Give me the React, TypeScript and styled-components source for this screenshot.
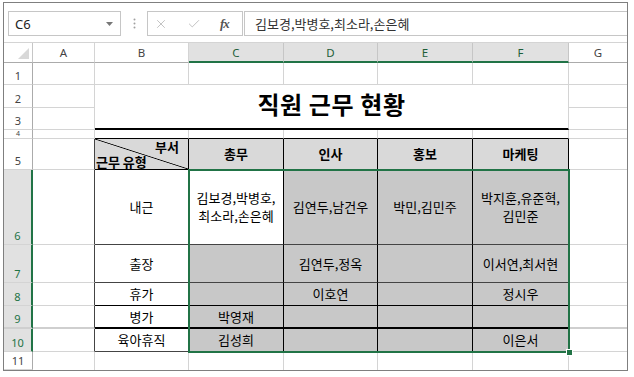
import styled, { createGlobalStyle } from 'styled-components'
import { X, Check } from 'lucide-react'

type Line = 'grid' | 'dark' | 'black' | 'thick' | 'freeze' | 'none'

const LINES: Record<Line, string> = {
  grid: '1px solid #d4d4d4',
  dark: '1px solid #444',
  black: '1px solid #000',
  thick: '2px solid #000',
  freeze: '2px solid #cfcfcf',
  none: '0',
}

const GREEN = '#217346'
const COL_LETTERS = ['A', 'B', 'C', 'D', 'E', 'F', 'G']
const ROW_COUNT = 11

// sheet row -> grid row is r + 1, column A..G -> grid column 2..8
const CONTENT: Record<string, string> = {
  '5-4': '총무',
  '5-5': '인사',
  '5-6': '홍보',
  '5-7': '마케팅',
  '6-3': '내근',
  '6-4': '김보경,박병호,\n최소라,손은혜',
  '6-5': '김연두,남건우',
  '6-6': '박민,김민주',
  '6-7': '박지훈,유준혁,\n김민준',
  '7-3': '출장',
  '7-5': '김연두,정옥',
  '7-7': '이서연,최서현',
  '8-3': '휴가',
  '8-5': '이호연',
  '8-7': '정시우',
  '9-3': '병가',
  '9-4': '박영재',
  '10-3': '육아휴직',
  '10-4': '김성희',
  '10-7': '이은서',
}

function inTable(r: number, c: number) {
  return r >= 5 && r <= 10 && c >= 3 && c <= 7
}

function rightLine(r: number, c: number): Line {
  if (c === 8) return 'none'
  if (c === 2 && r >= 5 && r <= 10) return 'dark'
  if (inTable(r, c)) return 'black'
  return 'grid'
}

function bottomLine(r: number, c: number): Line {
  if (r === ROW_COUNT) return 'none'
  if (r === 4 && c >= 3 && c <= 7) return 'black'
  if (inTable(r, c)) {
    if (r === 5 || r === 8) return 'black'
    if (r === 9) return 'thick'
    return 'dark'
  }
  if (r === 9) return 'freeze'
  return 'grid'
}

function fillOf(r: number, c: number) {
  if (r === 5 && inTable(r, c)) return '#d9d9d9'
  if (r >= 6 && r <= 10 && c >= 4 && c <= 7 && !(r === 6 && c === 4)) return '#c8c8c8'
  return '#fff'
}

export default function App() {
  const cells = []
  for (let r = 1; r <= ROW_COUNT; r++) {
    for (let c = 2; c <= 8; c++) {
      if ((r === 2 || r === 3) && c >= 3 && c <= 7) continue
      if (r === 5 && c === 3) continue
      cells.push(
        <Cell
          key={`${r}-${c}`}
          $col={c}
          $row={r + 1}
          $right={rightLine(r, c)}
          $bottom={bottomLine(r, c)}
          $fill={fillOf(r, c)}
          $bold={r === 5}
        >
          {CONTENT[`${r}-${c}`]}
        </Cell>
      )
    }
  }

  return (
    <>
      <GlobalStyle />
      <Window>
        <FormulaBar>
          <NameBox>
            <span>C6</span>
            <svg width="7" height="4" viewBox="0 0 7 4">
              <path d="M0 0h7L3.5 4z" fill="#777" />
            </svg>
          </NameBox>
          <Grip>
            <svg width="3" height="11" viewBox="0 0 3 11">
              <circle cx="1.5" cy="1.5" r="1" fill="#a0a0a0" />
              <circle cx="1.5" cy="5.5" r="1" fill="#a0a0a0" />
              <circle cx="1.5" cy="9.5" r="1" fill="#a0a0a0" />
            </svg>
          </Grip>
          <IconBox>
            <X size={14} strokeWidth={1.4} color="#b5b5b5" />
            <Check size={14} strokeWidth={1.4} color="#b5b5b5" />
            <Fx>fx</Fx>
          </IconBox>
          <FormulaInput>김보경,박병호,최소라,손은혜</FormulaInput>
        </FormulaBar>

        <Sheet>
          <Corner>
            <Triangle />
          </Corner>
          {COL_LETTERS.map((l, i) => (
            <ColHeader key={l} $col={i + 2} $selected={i >= 2 && i <= 5} $last={i === 6}>
              {l}
            </ColHeader>
          ))}
          {Array.from({ length: ROW_COUNT }, (_, i) => i + 1).map((r) => (
            <RowHeader key={r} $row={r + 1} $selected={r >= 6 && r <= 10} $squash={r === 4}>
              {r}
            </RowHeader>
          ))}

          {cells}

          <Title>직원 근무 현황</Title>
          <SplitHeader>
            <span>부서</span>
            <span>근무 유형</span>
          </SplitHeader>

          <Selection>
            <FillHandle />
          </Selection>
        </Sheet>
      </Window>
    </>
  )
}

const GlobalStyle = createGlobalStyle`
  html, body {
    margin: 0;
    padding: 0;
    background: #fff;
  }
  body {
    font-family: "Noto Sans CJK KR", "Noto Sans", sans-serif;
  }
  * {
    box-sizing: border-box;
  }
`

const Window = styled.div`
  margin: 2px 0 0 3px;
  width: 625px;
  border: 1px solid #7f7f7f;
  background: #fff;
`

const FormulaBar = styled.div`
  display: flex;
  align-items: flex-start;
  height: 40px;
  padding: 8px 0 0 4px;
`

const NameBox = styled.div`
  width: 113px;
  height: 25px;
  border: 1px solid #c6c6c6;
  display: flex;
  align-items: center;
  justify-content: space-between;
  padding: 0 7px 0 6px;
  font-family: "Noto Sans", sans-serif;
  font-size: 13px;
  color: #222;
`

const Grip = styled.div`
  width: 26px;
  height: 25px;
  display: flex;
  align-items: center;
  justify-content: center;
`

const IconBox = styled.div`
  width: 96px;
  height: 25px;
  border: 1px solid #c6c6c6;
  display: flex;
  align-items: center;
  gap: 19px;
  padding-left: 6px;
`

const Fx = styled.span`
  font-family: "Liberation Serif", serif;
  font-style: italic;
  font-weight: 700;
  font-size: 13px;
  color: #555;
  letter-spacing: -1px;
`

const FormulaInput = styled.div`
  flex: 1;
  height: 25px;
  margin-left: 1px;
  border: 1px solid #c6c6c6;
  border-right: 0;
  display: flex;
  align-items: center;
  padding-left: 10px;
  font-size: 13px;
  color: #333;
`

const Sheet = styled.div`
  display: grid;
  grid-template-columns: 29px 62px 94px 95px 94px 95px 96px 58px;
  grid-template-rows: 20px 22px 23px 22px 9px 31px 75px 38px 23px 23px 23px 18px;
  border-top: 1px solid #d4d4d4;
  margin-top: -1px;
`

const Corner = styled.div`
  grid-column: 1;
  grid-row: 1;
  border-right: 1px solid #c6c6c6;
  border-bottom: 1px solid #ababab;
  display: flex;
  align-items: flex-end;
  justify-content: flex-end;
  padding: 0 3px 3px 0;
`

const Triangle = styled.div`
  width: 0;
  height: 0;
  border-left: 11px solid transparent;
  border-bottom: 11px solid #d8d8d8;
`

const ColHeader = styled.div<{ $col: number; $selected: boolean; $last: boolean }>`
  grid-column: ${({ $col }) => $col};
  grid-row: 1;
  display: flex;
  align-items: center;
  justify-content: center;
  background: ${({ $selected }) => ($selected ? '#e1e1e1' : '#fff')};
  border-right: ${({ $selected, $last }) =>
    $last ? '0' : `1px solid ${$selected ? '#c6c6c6' : '#d4d4d4'}`};
  border-bottom: ${({ $selected }) => ($selected ? `2px solid ${GREEN}` : '1px solid #ababab')};
  font-family: "Noto Sans", sans-serif;
  font-size: 11.5px;
  color: ${({ $selected }) => ($selected ? '#1e5e39' : '#444')};
`

const RowHeader = styled.div<{ $row: number; $selected: boolean; $squash: boolean }>`
  grid-column: 1;
  grid-row: ${({ $row }) => $row};
  display: flex;
  align-items: ${({ $squash }) => ($squash ? 'center' : 'flex-end')};
  justify-content: center;
  overflow: hidden;
  padding-bottom: ${({ $squash }) => ($squash ? '0' : '1px')};
  background: ${({ $selected }) => ($selected ? '#e1e1e1' : '#fff')};
  border-right: ${({ $selected }) => ($selected ? `2px solid ${GREEN}` : '1px solid #ababab')};
  border-bottom: ${({ $row }) => ($row === 10 ? '2px solid #cfcfcf' : '1px solid #d4d4d4')};
  font-family: "Noto Sans", sans-serif;
  font-size: ${({ $squash }) => ($squash ? '7px' : '11px')};
  line-height: ${({ $squash }) => ($squash ? '8px' : '14px')};
  color: ${({ $selected }) => ($selected ? GREEN : '#444')};
`

const Cell = styled.div<{
  $col: number
  $row: number
  $right: Line
  $bottom: Line
  $fill: string
  $bold: boolean
}>`
  grid-column: ${({ $col }) => $col};
  grid-row: ${({ $row }) => $row};
  border-right: ${({ $right }) => LINES[$right]};
  border-bottom: ${({ $bottom }) => LINES[$bottom]};
  background: ${({ $fill }) => $fill};
  display: flex;
  align-items: center;
  justify-content: center;
  text-align: center;
  white-space: pre-line;
  overflow: hidden;
  font-size: 13px;
  line-height: 18px;
  font-weight: ${({ $bold }) => ($bold ? 700 : 400)};
  color: #000;
`

const Title = styled.div`
  grid-column: 3 / span 5;
  grid-row: 3 / span 2;
  border-right: 1px solid #d4d4d4;
  border-bottom: 2px solid #000;
  display: flex;
  align-items: center;
  justify-content: center;
  padding-bottom: 6px;
  font-size: 24px;
  letter-spacing: 0.6px;
  font-weight: 700;
  color: #000;
`

const SplitHeader = styled.div`
  grid-column: 3;
  grid-row: 6;
  border-right: 1px solid #000;
  border-bottom: 1px solid #000;
  background: linear-gradient(
      to top right,
      transparent calc(50% - 0.8px),
      #000 50%,
      transparent calc(50% + 0.8px)
    ),
    #d9d9d9;
  display: flex;
  flex-direction: column;
  justify-content: space-between;
  padding: 0 9px 0 1px;
  font-size: 13px;
  line-height: 15px;
  font-weight: 700;
  color: #000;

  span:first-child {
    align-self: flex-end;
  }
`

const Selection = styled.div`
  grid-column: 4 / span 4;
  grid-row: 7 / span 5;
  margin: -1px;
  border: 2px solid ${GREEN};
  position: relative;
  z-index: 2;
  pointer-events: none;
`

const FillHandle = styled.div`
  position: absolute;
  right: -5px;
  bottom: -5px;
  width: 7px;
  height: 7px;
  background: ${GREEN};
  border: 1px solid #fff;
`
